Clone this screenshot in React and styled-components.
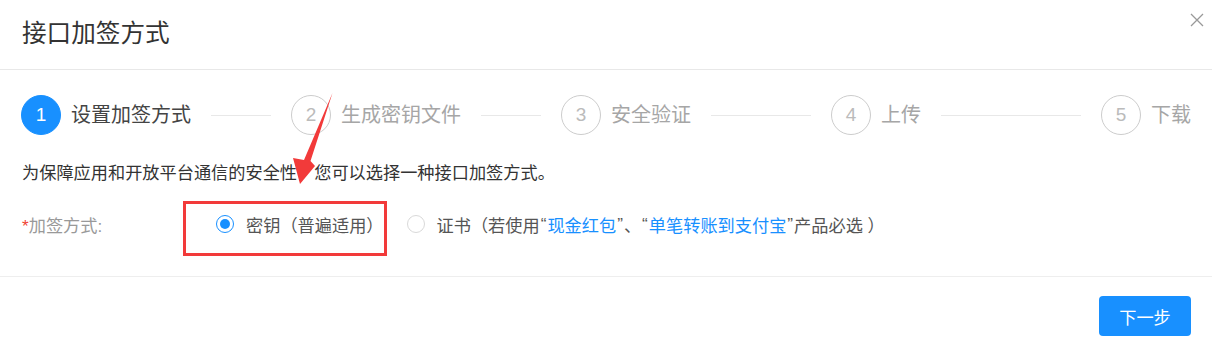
import React from 'react';
import styled, { createGlobalStyle } from 'styled-components';

const GlobalStyle = createGlobalStyle`
  html, body {
    margin: 0;
    padding: 0;
    background: #fff;
  }
  body {
    font-family: "Liberation Sans", "Noto Sans CJK SC", sans-serif;
    color: #333;
  }
`;

const Modal = styled.div`
  position: relative;
  width: 1212px;
  height: 349px;
  background: #fff;
  box-sizing: border-box;
`;

const Header = styled.div`
  height: 70px;
  box-sizing: border-box;
  border-bottom: 1px solid #e8e8e8;
  padding-left: 22px;
  display: flex;
  align-items: center;
`;

const Title = styled.h2`
  margin: 0 0 2px;
  font-size: 24.6px;
  font-weight: normal;
  line-height: 30px;
  color: #333;
`;

const Close = styled.button`
  position: absolute;
  top: 13px;
  right: 8px;
  width: 14px;
  height: 14px;
  padding: 0;
  border: 0;
  background: none;
  cursor: pointer;
  display: flex;
`;

const Body = styled.div`
  padding: 25px 21px 40px;
  border-bottom: 1px solid #eee;
`;

const Steps = styled.div`
  display: flex;
  height: 40px;
`;

const StepItem = styled.div`
  display: flex;
  align-items: center;
  flex: ${p => (p.last ? 'none' : '1')};
  margin-right: ${p => (p.last ? '0' : '20px')};
  overflow: hidden;
`;

const StepIcon = styled.span`
  width: 40px;
  height: 40px;
  box-sizing: border-box;
  border-radius: 50%;
  flex: none;
  display: flex;
  align-items: center;
  justify-content: center;
  font-size: 19px;
  margin-right: 10px;
  background: ${p => (p.active ? '#1890ff' : '#fff')};
  border: 1px solid ${p => (p.active ? '#1890ff' : '#ccc')};
  color: ${p => (p.active ? '#fff' : '#bbb')};
`;

const StepTitle = styled.span`
  font-size: 20px;
  line-height: 26px;
  white-space: nowrap;
  color: ${p => (p.active ? '#444' : '#a6a6a6')};
`;

const StepLine = styled.span`
  flex: 1;
  height: 1px;
  margin-left: 20px;
  background: #e8e8e8;
`;

const Desc = styled.p`
  margin: 26px 0 0 1px;
  font-size: 17.2px;
  line-height: 24px;
  color: #333;
`;

const FormRow = styled.div`
  display: flex;
  align-items: center;
  margin-top: 27px;
  height: 24px;
  font-size: 17.2px;
`;

const Label = styled.label`
  width: 194px;
  padding-left: 1px;
  color: #999;
  flex: none;
`;

const Required = styled.span`
  color: #f04134;
`;

const RadioGroup = styled.div`
  display: flex;
  align-items: center;
  gap: 23px;
`;

const RadioOption = styled.label`
  display: flex;
  align-items: center;
  color: #555;
  white-space: nowrap;
`;

const RadioDot = styled.span`
  position: relative;
  width: 18px;
  height: 18px;
  box-sizing: border-box;
  border-radius: 50%;
  border: 1px solid ${p => (p.checked ? '#1890ff' : '#d9d9d9')};
  margin-right: 12px;
  flex: none;

  &::after {
    content: '';
    display: ${p => (p.checked ? 'block' : 'none')};
    position: absolute;
    left: 3px;
    top: 3px;
    width: 10px;
    height: 10px;
    border-radius: 50%;
    background: #1890ff;
  }
`;

const Link = styled.a`
  color: #1890ff;
  text-decoration: none;
`;

const Quote = styled.span`
  font-family: "Liberation Sans", sans-serif;
  padding: 0 1px;
`;

const Footer = styled.div`
  display: flex;
  justify-content: flex-end;
  padding: 19px 21px;
`;

const Button = styled.button`
  width: 92px;
  height: 40px;
  border: 0;
  border-radius: 4px;
  background: #1890ff;
  color: #fff;
  font-family: inherit;
  font-size: 17.2px;
  cursor: pointer;
`;

const HighlightBox = styled.div`
  position: absolute;
  left: 183px;
  top: 201px;
  width: 204px;
  height: 55px;
  box-sizing: border-box;
  border: 3px solid #f23a3a;
  pointer-events: none;
`;

const Arrow = styled.svg`
  position: absolute;
  left: 0;
  top: 0;
  pointer-events: none;
`;

const steps = ['设置加签方式', '生成密钥文件', '安全验证', '上传', '下载'];

export default function App() {
  return (
    <Modal>
      <GlobalStyle />
      <Header>
        <Title>接口加签方式</Title>
      </Header>
      <Close aria-label="close">
        <svg width="14" height="14" viewBox="0 0 14 14">
          <path d="M1 1 L13 13 M13 1 L1 13" stroke="#999" strokeWidth="1.3" fill="none" />
        </svg>
      </Close>

      <Body>
        <Steps>
          {steps.map((s, i) => {
            const last = i === steps.length - 1;
            return (
              <StepItem key={s} last={last}>
                <StepIcon active={i === 0}>{i + 1}</StepIcon>
                <StepTitle active={i === 0}>{s}</StepTitle>
                {!last && <StepLine />}
              </StepItem>
            );
          })}
        </Steps>

        <Desc>为保障应用和开放平台通信的安全性，您可以选择一种接口加签方式。</Desc>

        <FormRow>
          <Label>
            <Required>*</Required>加签方式:
          </Label>
          <RadioGroup>
            <RadioOption>
              <RadioDot checked />
              密钥（普遍适用）
            </RadioOption>
            <RadioOption>
              <RadioDot />
              证书（若使用<Quote>“</Quote>
              <Link>现金红包</Link>
              <Quote>”</Quote>、<Quote>“</Quote>
              <Link>单笔转账到支付宝</Link>
              <Quote>”</Quote>产品必选 ）
            </RadioOption>
          </RadioGroup>
        </FormRow>
      </Body>

      <Footer>
        <Button>下一步</Button>
      </Footer>

      <HighlightBox />
      <Arrow width="1212" height="349">
        <polygon
          points="332.5,93 310.5,161 315,166 300,184 293,158 304,160"
          fill="#f23a3a"
        />
      </Arrow>
    </Modal>
  );
}
